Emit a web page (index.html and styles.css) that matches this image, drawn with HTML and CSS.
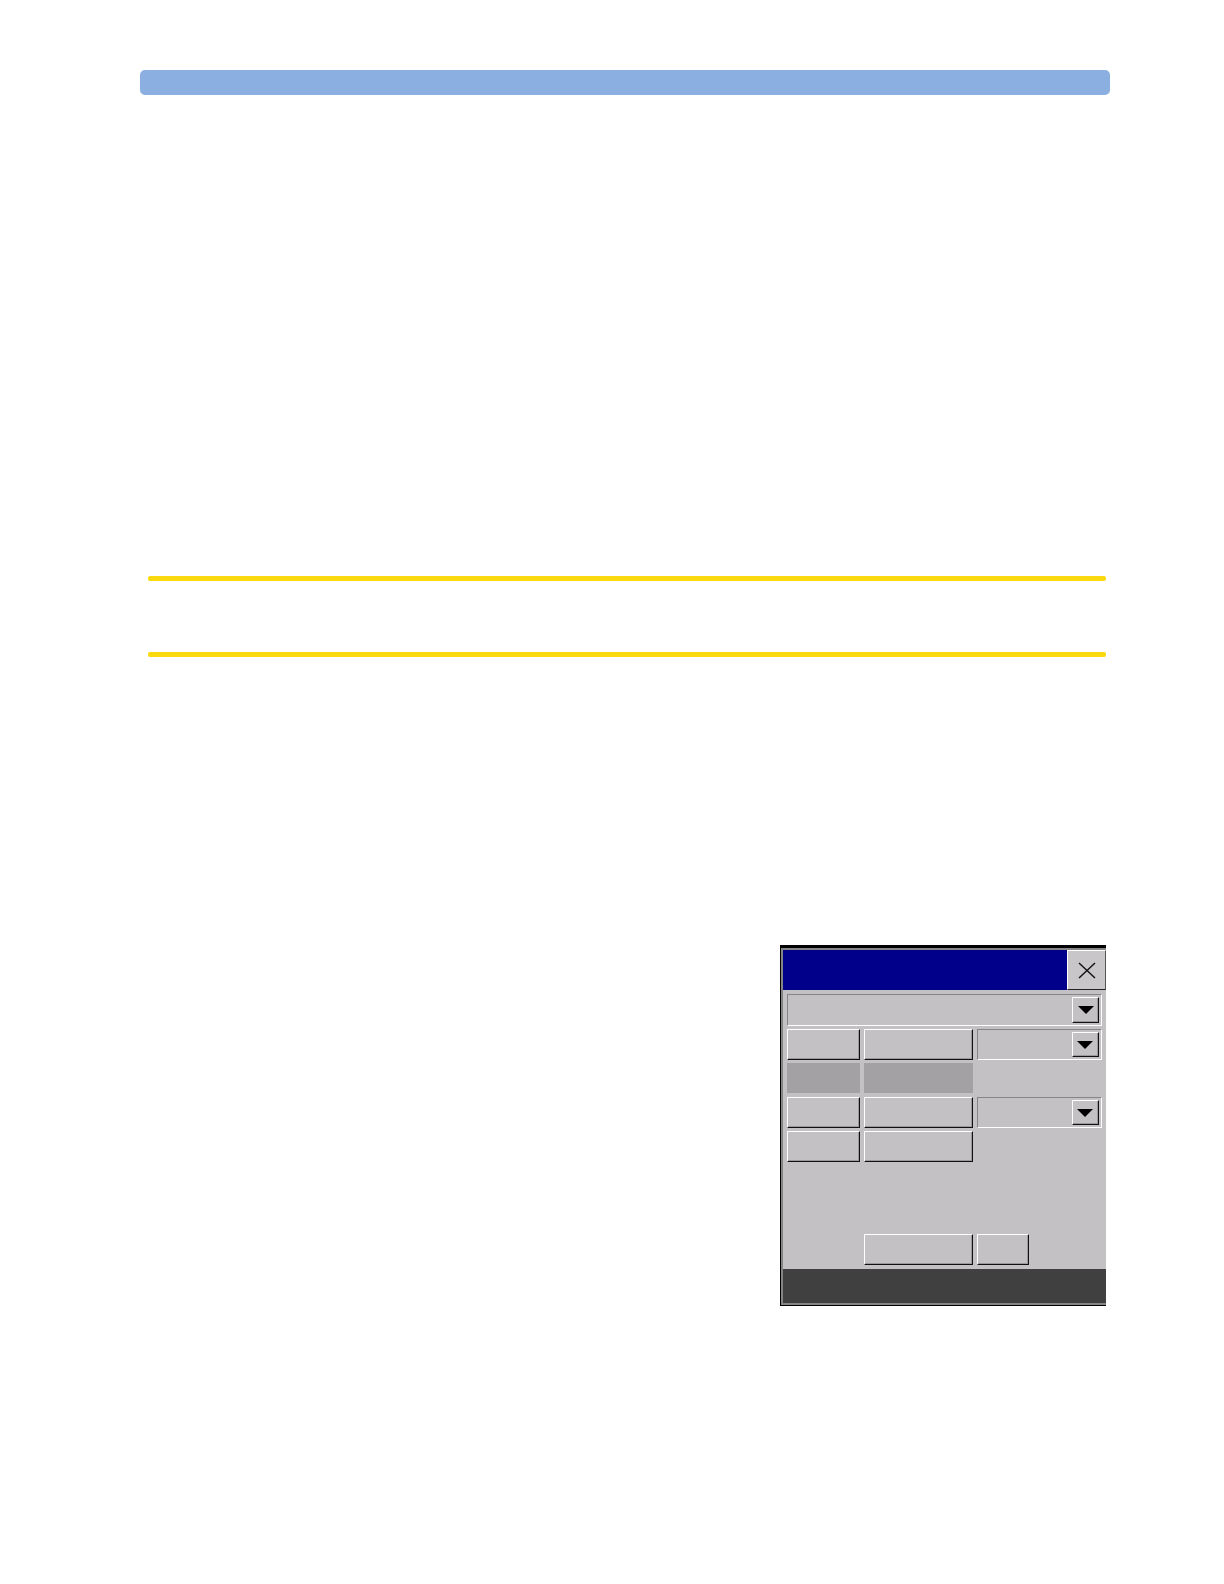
FILE: index.html
```html
<!DOCTYPE html>
<html lang="en">
<head>
<meta charset="utf-8">
<title>Setup window</title>
<meta name="viewport" content="width=device-width, initial-scale=1">
<link rel="stylesheet" href="styles.css">
</head>
<body>
<header class="banner"></header>
<main class="content">
  <section class="notice">
    <hr class="rule">
    <hr class="rule">
  </section>
  <section class="figure">
    <form class="dialog">
      <div class="titlebar">
        <div class="title"></div>
        <button class="close" type="button" aria-label="Close">
          <svg width="18" height="17" viewBox="0 0 18 17" aria-hidden="true"><path d="M1 1 L17 16 M17 1 L1 16" fill="none" stroke="#101010" stroke-width="1.4"/></svg>
        </button>
      </div>
      <div class="body">
        <div class="combo combo-wide">
          <select class="select" aria-label="Category"></select>
          <span class="arrow"><svg width="16" height="8" viewBox="0 0 16 8" aria-hidden="true"><path d="M0 0H16L8 8Z"/></svg></span>
        </div>
        <div class="row">
          <button class="btn" type="button" aria-label="Item 1"></button>
          <button class="btn" type="button" aria-label="Value 1"></button>
          <div class="combo">
            <select class="select" aria-label="Option 1"></select>
            <span class="arrow"><svg width="16" height="8" viewBox="0 0 16 8" aria-hidden="true"><path d="M0 0H16L8 8Z"/></svg></span>
          </div>
        </div>
        <div class="row">
          <button class="btn btn-off" type="button" aria-label="Item 2" disabled></button>
          <button class="btn btn-off" type="button" aria-label="Value 2" disabled></button>
        </div>
        <div class="row">
          <button class="btn" type="button" aria-label="Item 3"></button>
          <button class="btn" type="button" aria-label="Value 3"></button>
          <div class="combo">
            <select class="select" aria-label="Option 3"></select>
            <span class="arrow"><svg width="16" height="8" viewBox="0 0 16 8" aria-hidden="true"><path d="M0 0H16L8 8Z"/></svg></span>
          </div>
        </div>
        <div class="row">
          <button class="btn" type="button" aria-label="Item 4"></button>
          <button class="btn" type="button" aria-label="Value 4"></button>
        </div>
        <div class="row row-actions">
          <button class="btn btn-main" type="button" aria-label="Apply"></button>
          <button class="btn btn-small" type="button" aria-label="More"></button>
        </div>
      </div>
      <div class="status"></div>
    </form>
  </section>
</main>
</body>
</html>
```
FILE: styles.css
```css
* {
  box-sizing: border-box;
}

body {
  margin: 0;
  min-height: 100vh;
  padding: 70px 114px 100px 140px;
  background: #fff;
  font-family: "Liberation Sans", Arial, sans-serif;
  font-size: 14px;
}

.banner {
  height: 25px;
  border-radius: 5px;
  background: #8aafe0;
}

.content {
  padding: 481px 4px 0 8px;
}

.notice {
  display: flex;
  flex-direction: column;
  gap: 71px;
}

.rule {
  width: 100%;
  height: 5px;
  margin: 0;
  border: 0;
  border-radius: 2px;
  background: #fbd90f;
}

.figure {
  display: flex;
  justify-content: flex-end;
  margin-top: 288px;
}

.dialog {
  width: 34%;
  min-width: 300px;
  border-top: 3px solid #000;
  border-left: 1px solid #000;
  border-bottom: 1px solid #000;
  background: #c3c1c3;
}

.titlebar {
  display: flex;
  height: 42px;
  border-top: 2px solid #858585;
  border-left: 2px solid #858585;
}

.title {
  flex: 1;
  background: #00008b;
}

.close {
  display: flex;
  align-items: center;
  justify-content: center;
  width: 39px;
  padding: 0;
  border: 1px solid;
  border-color: #fff #555 #222 #fff;
  background: #c8c6c8;
}

.body {
  display: flex;
  flex-direction: column;
  gap: 3px;
  padding: 4px 4px 4px;
  border-left: 2px solid #858585;
}

.row {
  display: grid;
  grid-template-columns: 73fr 109fr 125fr;
  column-gap: 4px;
  min-height: 31px;
}

.row-actions {
  margin-top: 69px;
}

.btn {
  padding: 0;
  border: 1px solid;
  border-color: #fff #111 #111 #fff;
  box-shadow: inset -1px -1px #999;
  background: #c3c1c3;
}

.btn-off {
  margin-bottom: 1px;
  border-color: #a3a1a3;
  box-shadow: none;
  background: #a3a1a3;
}

.btn-main {
  grid-column: 2;
}

.btn-small {
  width: 52px;
}

.combo {
  display: flex;
  padding: 2px;
  border: 1px solid;
  border-color: #858585 #fff #fff #858585;
}

.combo-wide {
  height: 32px;
}

.select {
  flex: 1;
  min-width: 0;
  padding: 0;
  border: 0;
  appearance: none;
  background: transparent;
}

.arrow {
  display: flex;
  align-items: center;
  justify-content: center;
  width: 27px;
  border: 1px solid;
  border-color: #fff #111 #111 #fff;
  box-shadow: inset -1px -1px #999;
}

.status {
  height: 36px;
  border: solid #858585;
  border-width: 0 0 2px 2px;
  background: #414041;
}
```
